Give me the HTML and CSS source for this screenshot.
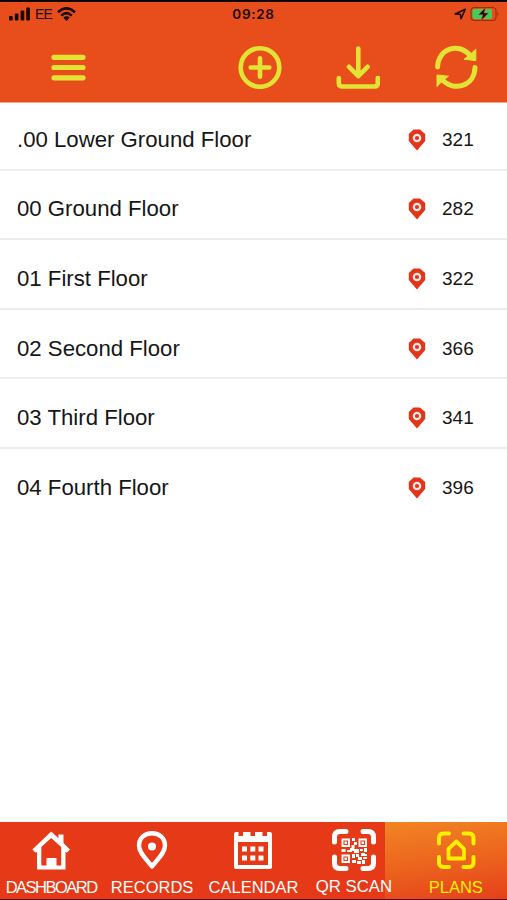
FILE: index.html
```html
<!DOCTYPE html>
<html lang="en">
<head>
    <meta charset="UTF-8">
    <meta name="viewport" content="width=device-width, initial-scale=1.0">
    <title>Plans</title>
    <link rel="stylesheet" href="styles.css">
</head>
<body>
    <div class="app">
        <header class="header">
            <div class="status">
                <div class="carrier">
                    <svg width="22" height="14" viewBox="0 0 22 14"><rect x="0" y="9" width="3.7" height="4.5" rx="1"/><rect x="5.8" y="6.5" width="3.7" height="7" rx="1"/><rect x="11.6" y="3.5" width="3.7" height="10" rx="1"/><rect x="17.2" y="0.5" width="3.7" height="13" rx="1"/></svg>
                    <span>EE</span>
                    <svg width="19" height="14" viewBox="0 0 19 14" fill="none" stroke="#1a0800" stroke-width="2.6"><path d="M1 5.2Q9.5 -2.6 18 5.2M4.2 8.6Q9.5 3.8 14.8 8.6"/><path d="M6.3 10.6Q9.5 8 12.7 10.6L9.5 14Z" fill="#1a0800" stroke="none"/></svg>
                </div>
                <time class="clock">09:28</time>
                <div class="power">
                    <svg width="13" height="12" viewBox="0 0 13 12" fill="none" stroke="#1a0800" stroke-width="1.5" stroke-linejoin="round"><path d="M1.2 6L11.3 1.2L7 10.8L6.3 6.2Z"/></svg>
                    <svg width="30" height="16" viewBox="0 0 30 16"><rect x="1" y="1.5" width="25" height="13" rx="3.5" fill="none" stroke="#96300f" stroke-width="1.2"/><rect x="2.5" y="3" width="19.5" height="10" rx="2" fill="#3fce5b"/><path d="M27.3 5.5Q29.5 8 27.3 10.5Z" fill="#96300f"/><path d="M15.5 1.5L8.5 8.7H12.8L11.2 14.5L18.5 7H14Z" stroke="#e84e1b" stroke-width=".5"/></svg>
                </div>
            </div>
            <nav class="toolbar">
                <svg class="tool menu" viewBox="0 0 44 44"><path d="M8 12.3H37M8 22.5H37M8 32.8H37" stroke-width="5.2"/></svg>
                <svg class="tool" viewBox="0 0 44 44"><circle cx="22" cy="22.5" r="19.3"/><path d="M22 13.2V31.8M12.7 22.5H31.3"/></svg>
                <svg class="tool" viewBox="0 0 44 44"><path d="M22.3 3.5V30M13 21.8L22.3 31.2L31.6 21.8M2.8 33V38Q2.8 41.5 6.5 41.5H38Q41.8 41.5 41.8 38V33"/></svg>
                <svg class="tool" viewBox="0 0 44 44"><path d="M3.6 22C4 3.5 25 -3.5 36.5 11M41 22.5C40.6 41.5 19 47.5 7.5 34" stroke-width="5"/><path class="solid" d="M41.8 4.5V15.6L30 14.3L35 10.5ZM3 41.2V30L14.5 31.2L9.5 35Z"/></svg>
            </nav>
        </header>

        <main class="floors">
            <div class="floor">
                <span class="name">.00 Lower Ground Floor</span>
                <svg class="pin" viewBox="0 0 18 22"><path d="M5.5 .5H12L17.2 5V12L9 21.5L.8 12V5Z"/><circle cx="9" cy="9" r="3.2"/></svg>
                <span class="count">321</span>
            </div>
            <div class="floor">
                <span class="name">00 Ground Floor</span>
                <svg class="pin" viewBox="0 0 18 22"><path d="M5.5 .5H12L17.2 5V12L9 21.5L.8 12V5Z"/><circle cx="9" cy="9" r="3.2"/></svg>
                <span class="count">282</span>
            </div>
            <div class="floor">
                <span class="name">01 First Floor</span>
                <svg class="pin" viewBox="0 0 18 22"><path d="M5.5 .5H12L17.2 5V12L9 21.5L.8 12V5Z"/><circle cx="9" cy="9" r="3.2"/></svg>
                <span class="count">322</span>
            </div>
            <div class="floor">
                <span class="name">02 Second Floor</span>
                <svg class="pin" viewBox="0 0 18 22"><path d="M5.5 .5H12L17.2 5V12L9 21.5L.8 12V5Z"/><circle cx="9" cy="9" r="3.2"/></svg>
                <span class="count">366</span>
            </div>
            <div class="floor">
                <span class="name">03 Third Floor</span>
                <svg class="pin" viewBox="0 0 18 22"><path d="M5.5 .5H12L17.2 5V12L9 21.5L.8 12V5Z"/><circle cx="9" cy="9" r="3.2"/></svg>
                <span class="count">341</span>
            </div>
            <div class="floor">
                <span class="name">04 Fourth Floor</span>
                <svg class="pin" viewBox="0 0 18 22"><path d="M5.5 .5H12L17.2 5V12L9 21.5L.8 12V5Z"/><circle cx="9" cy="9" r="3.2"/></svg>
                <span class="count">396</span>
            </div>
        </main>

        <nav class="tabs">
            <a class="tab dashboard">
                <svg viewBox="0 0 44 44"><path class="fill" fill-rule="evenodd" d="M22.2 2.5L29.5 9.3V5.5H34.5V14L41 20.5L37.8 23.8L36.5 22.7V40.5H8V22.7L6.8 23.8L3.3 20.5ZM22.2 9L12.3 18V36.5H17.5V29H27.5V36.5H32.2V18Z"/></svg>
                <span>DASHBOARD</span>
            </a>
            <a class="tab records">
                <svg viewBox="0 0 44 44"><path d="M22 37.5C17 30.5 9 24.5 9 16.5C9 9 14.5 4.2 22 4.2S35 9 35 16.5C35 24.5 27 30.5 22 37.5Z" stroke-width="4.4"/><circle class="fill" cx="22" cy="17.5" r="4"/></svg>
                <span>RECORDS</span>
            </a>
            <a class="tab calendar">
                <svg viewBox="0 0 44 44"><path class="fill" fill-rule="evenodd" d="M3 5Q3 3 5 3H7.5V7H12V3H19.5V7H24V3H31.5V7H36V3H39Q41 3 41 5V38Q41 40 39 40H5Q3 40 3 38ZM7 13V36H37V13Z"/><path class="fill" d="M11 17.5H16V22.5H11ZM19.3 17.5H24.3V22.5H19.3ZM27.5 17.5H32.5V22.5H27.5ZM11 26.5H16V31.5H11ZM19.3 26.5H24.3V31.5H19.3ZM27.5 26.5H32.5V31.5H27.5Z"/></svg>
                <span>CALENDAR</span>
            </a>
            <a class="tab qr">
                <svg viewBox="0 0 44 44"><path d="M2.5 13V8Q2.5 2.5 8 2.5H14M31 2.5H36Q41.5 2.5 41.5 8V13M2.5 28V34Q2.5 39.5 8 39.5H14M31 39.5H36Q41.5 39.5 41.5 34V28" stroke-width="5"/><path d="M10.5 10.5H17V17H10.5ZM27.5 10.5H34V17H27.5ZM10.5 26.5H17V33H10.5Z" stroke-width="1.9" stroke-linejoin="miter"/><path class="fill" d="M12.5 12.5h2.5v2.5h-2.5zM29.5 12.5h2.5v2.5h-2.5zM12.5 28.5h2.5v2.5h-2.5zM20 9h3v3h-3zM22 13h3v3h-3zM19.5 16h3v4h-3zM9.5 20h4v3h-4zM15 21h5v2h-5zM18 19h4v3h-4zM22 20h5v4h-5zM28 20h3v2h-3zM32 19h3v4h-3zM20 25h3v4h-3zM24 25h3v3h-3zM29 24h4v3h-4zM26 28h4v3h-4zM31 28h4v2h-4zM20 31h4v3h-4zM25 32h4v3h-4zM30 31h3v4h-3zM33 25h2v2h-2z"/></svg>
                <span>QR SCAN</span>
            </a>
            <a class="tab active">
                <svg viewBox="0 0 44 44"><path d="M5 14.5V9Q5 4.5 9.5 4.5H15M29.5 4.5H35Q39.5 4.5 39.5 9V14.5M5 28V33.5Q5 38 9.5 38H15M29.5 38H35Q39.5 38 39.5 33.5V28" stroke-width="4"/><path d="M14.5 29.5V19.8L22.3 12.5L30 19.8V29.5Z" stroke-width="3.8"/></svg>
                <span>PLANS</span>
            </a>
        </nav>
    </div>
</body>
</html>
```
FILE: styles.css
```css
* { box-sizing: border-box; }
body {
    margin: 0;
    font-family: "Liberation Sans", Arial, sans-serif;
    background: #fff;
    color: #161616;
}
svg { display: block; flex: none; }
.app {
    display: flex;
    flex-direction: column;
    height: 900px;
    border-top: 2px solid #100300;
    border-bottom: 1px solid #500b06;
}
.header {
    height: 101px;
    background: #e84e1b;
    border-bottom: 1px solid #f5a58b;
}
.status {
    display: grid;
    grid-template-columns: 1fr auto 1fr;
    align-items: center;
    height: 23px;
    padding: 0 7px 0 9px;
    color: #1a0800;
    fill: #1a0800;
}
.carrier { display: flex; align-items: center; gap: 4px; font-size: 14px; letter-spacing: -0.8px; }
.carrier span { width: 18px; }
.clock { margin-right: 2px; font-family: Inter, sans-serif; font-size: 13.5px; font-weight: 600; letter-spacing: 0.7px; }
.power { display: flex; align-items: center; justify-content: flex-end; gap: 3px; }
.toolbar {
    display: flex;
    gap: 54px;
    padding: 20px 29px 0 46px;
}
.tool {
    width: 44px;
    height: 44px;
    fill: none;
    stroke: #e2e334;
    stroke-width: 4.6;
    stroke-linecap: round;
    stroke-linejoin: round;
}
.menu { margin-right: auto; }
.solid { fill: #e2e334; stroke-width: 1; }
.floors { flex: 1; }
.floor {
    display: flex;
    align-items: center;
    height: 69.6px;
    padding: 10px 0 0 17px;
    border-bottom: 2px solid #ececec;
}
.floor:first-child { height: 67.6px; padding-top: 8px; }
.floor:last-child { border-bottom-color: transparent; }
.name { flex: 1; font-size: 22.2px; }
.pin { width: 18px; height: 22px; fill: #e2351a; }
.pin circle { stroke: #ffe9e4; stroke-width: 2.2; }
.count { width: 81px; padding-left: 16px; font-size: 19px; }
.tabs {
    display: grid;
    grid-template-columns: repeat(5, 1fr);
    height: 77px;
    background: #e63917;
}
.tab {
    position: relative;
    display: flex;
    flex-direction: column;
    align-items: center;
    gap: 4px;
    padding-top: 7px;
    color: #fff;
    font-size: 16.5px;
    line-height: 20px;
    white-space: nowrap;
    z-index: 1;
}
.tab svg {
    width: 44px;
    height: 44px;
    fill: none;
    stroke: #fff;
    stroke-linecap: round;
    stroke-linejoin: round;
}
.tab .fill { fill: #fff; stroke: none; }
.dashboard { padding-left: 1px; letter-spacing: -1.5px; }
.qr { padding-right: 2px; font-size: 16.8px; }
.tab.active { padding-right: 1px; color: #ffef00; z-index: 0; }
.tab.active svg { stroke: #ffef00; z-index: 1; }
.tab.active span { z-index: 1; }
/* highlight reaches under the neighbouring tab */
.tab.active::before {
    content: "";
    position: absolute;
    inset: 0 0 0 -21px;
    background: linear-gradient(172deg, #f18524 0%, #ec651e 50%, #e5401a 100%);
}
```
